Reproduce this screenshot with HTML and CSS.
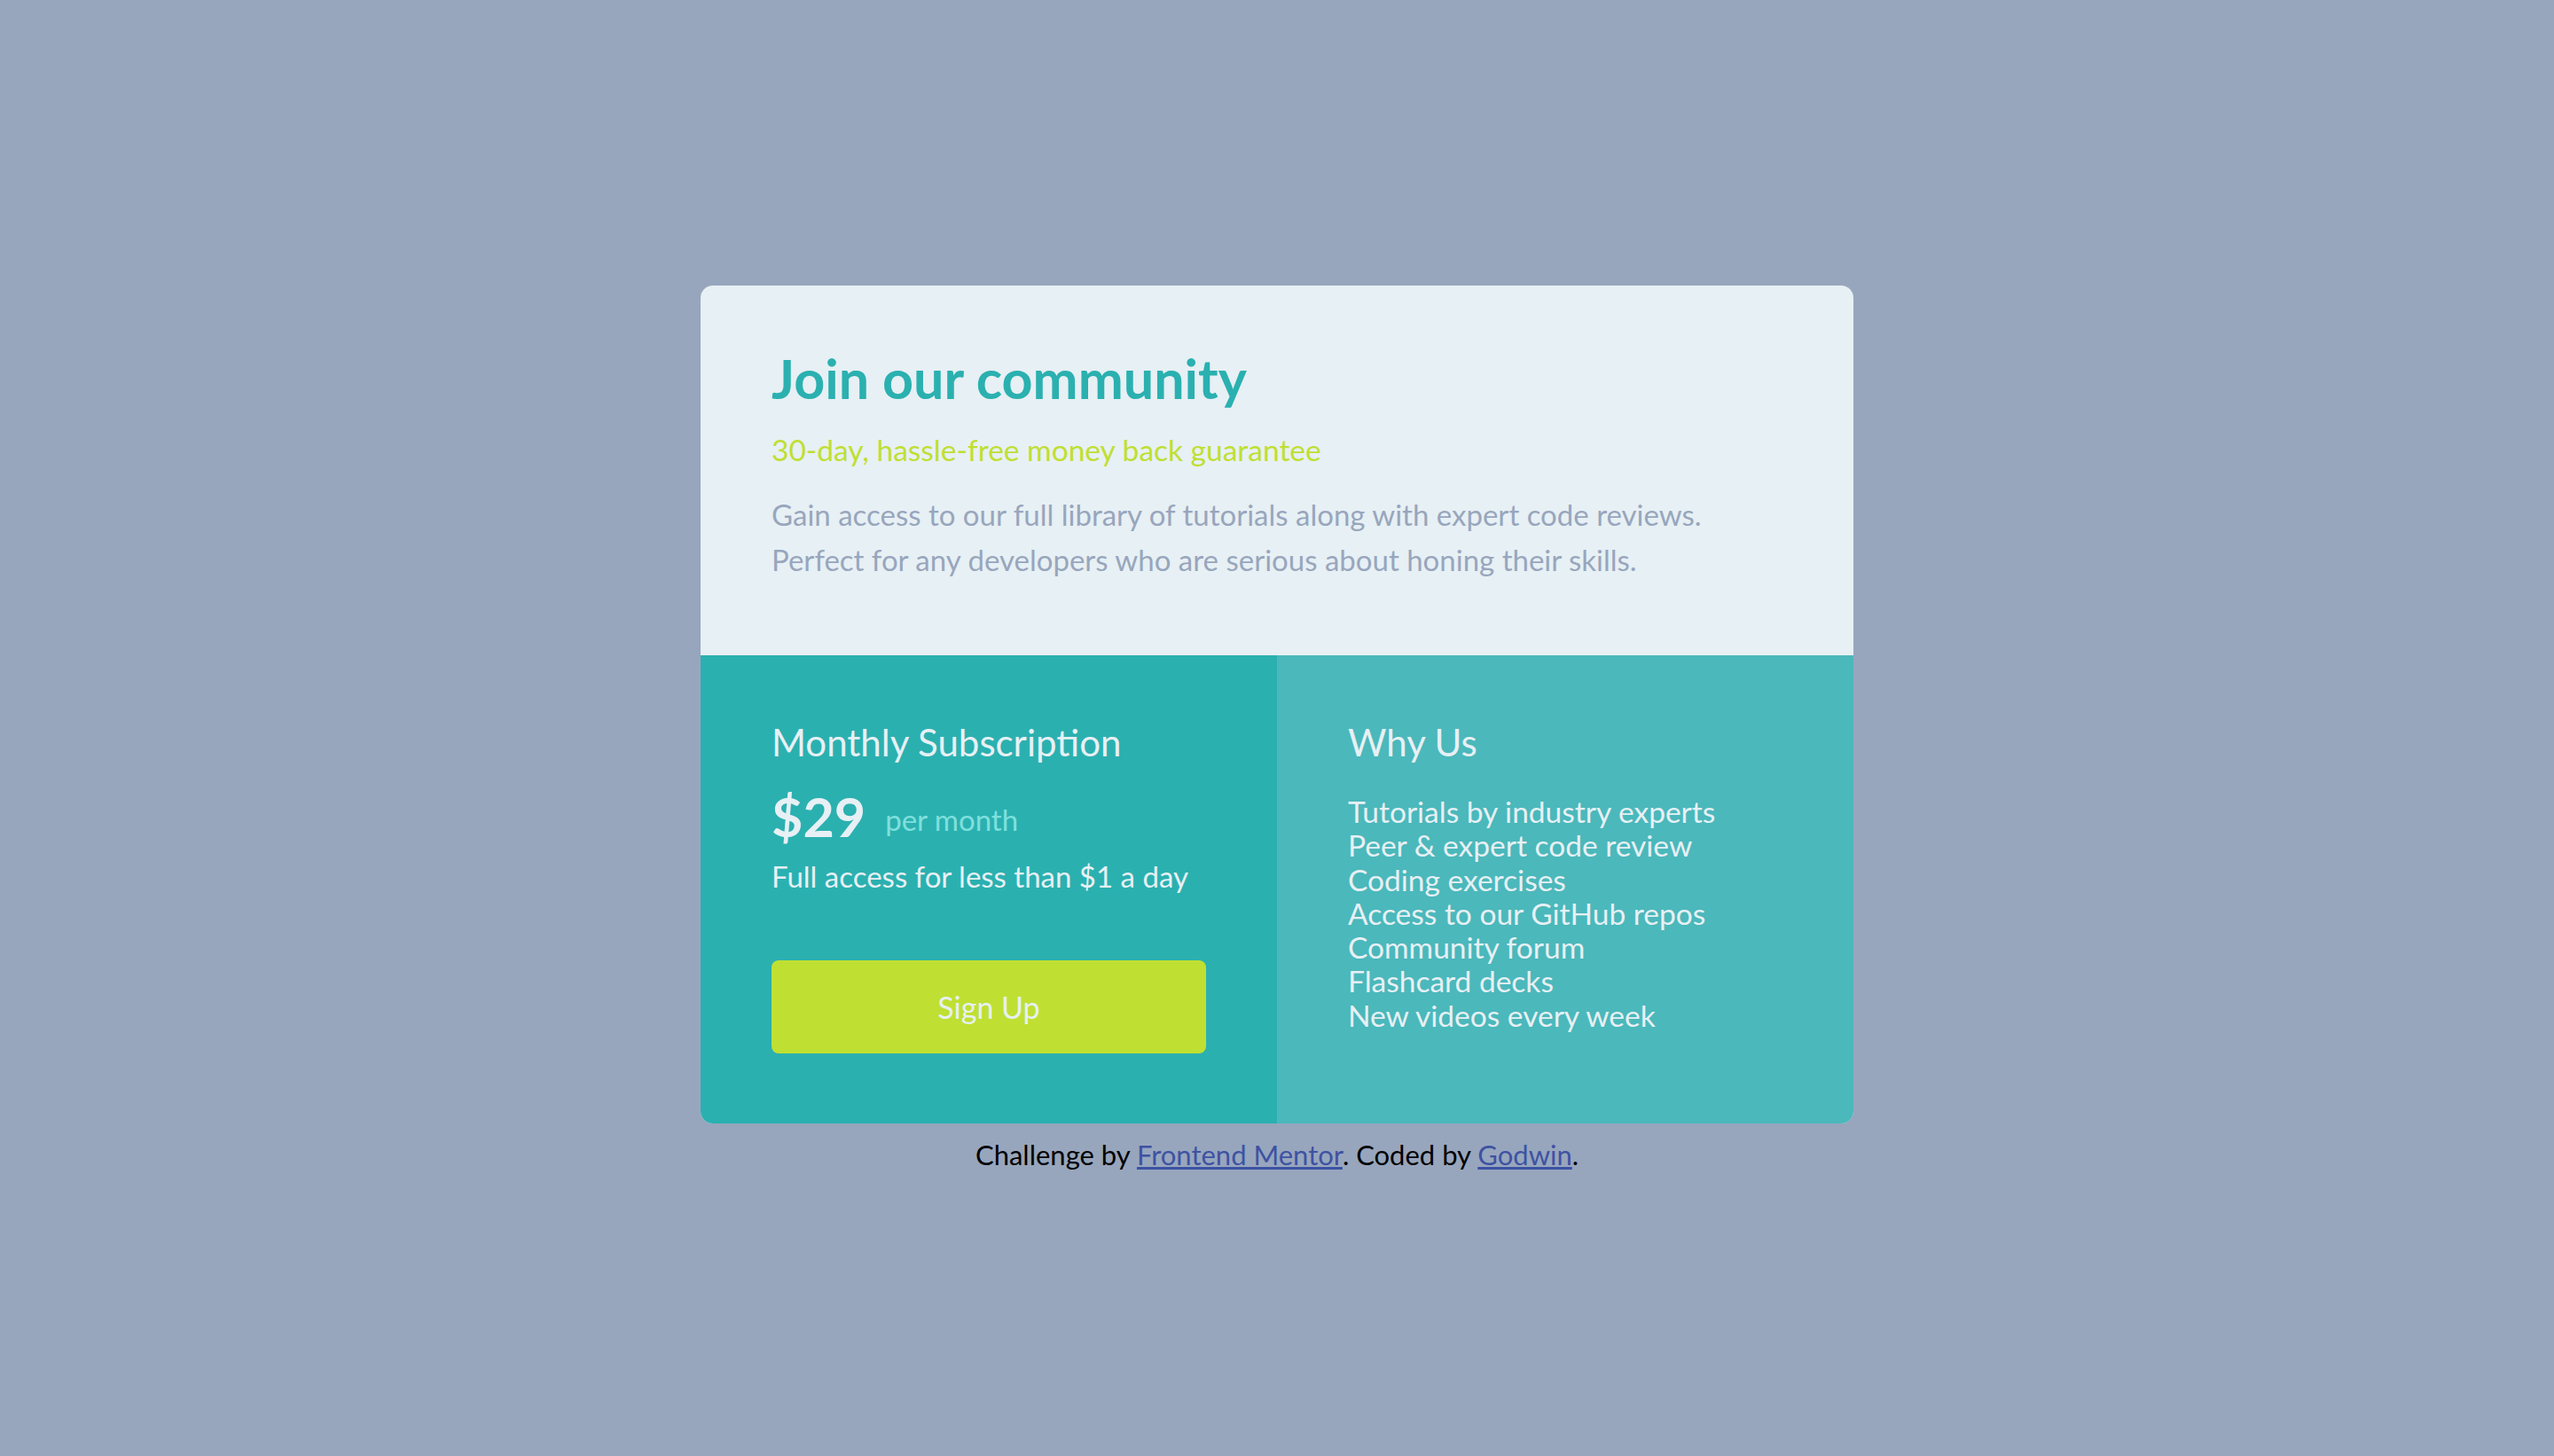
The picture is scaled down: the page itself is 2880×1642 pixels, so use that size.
FILE: index.html
```html
<!DOCTYPE html>
<html lang="en">
<head>
<meta charset="utf-8">
<title>Join our community</title>
<link rel="stylesheet" href="styles.css">
</head>
<body>
<main class="page">
  <section class="card">
    <div class="intro">
      <h1 class="title">Join our community</h1>
      <p class="guarantee">30-day, hassle-free money back guarantee</p>
      <p class="desc">Gain access to our full library of tutorials along with expert code reviews.<br>Perfect for any developers who are serious about honing their skills.</p>
    </div>
    <div class="bottom">
      <div class="sub">
        <h2 class="col-title">Monthly Subscription</h2>
        <div class="price-row"><span class="price">$29</span><span class="per">per month</span></div>
        <p class="access">Full access for less than $1 a day</p>
        <button class="signup">Sign Up</button>
      </div>
      <div class="why">
        <h2 class="col-title">Why Us</h2>
        <ul class="list">
          <li>Tutorials by industry experts</li>
          <li>Peer &amp; expert code review</li>
          <li>Coding exercises</li>
          <li>Access to our GitHub repos</li>
          <li>Community forum</li>
          <li>Flashcard decks</li>
          <li>New videos every week</li>
        </ul>
      </div>
    </div>
  </section>
  <footer class="attribution">Challenge by <a href="#">Frontend Mentor</a>. Coded by <a href="#">Godwin</a>.</footer>
</main>
</body>
</html>
```
FILE: styles.css
```css
* { box-sizing: border-box; }
html, body { margin: 0; padding: 0; }
body {
  background: #97a6bd;
  font-family: "Lato", "Open Sans", sans-serif;
  height: 1642px;
}
.page {
  height: 100%;
  padding-top: 322px;
  display: flex;
  flex-direction: column;
  align-items: center;
}
.card {
  width: 1300px;
  border-radius: 14px;
  overflow: hidden;
  background: #e7f0f4;
}
.intro {
  padding: 69px 80px 0;
  height: 417px;
}
.title {
  margin: 0;
  color: #2bb0b0;
  font-size: 61px;
  font-weight: 700;
  line-height: 72px;
}
.guarantee {
  margin: 24px 0 0;
  color: #bfdf32;
  font-size: 33.5px;
  line-height: 40px;
}
.desc {
  margin: 28px 0 0;
  color: #98a6bd;
  font-size: 33px;
  line-height: 51px;
}
.bottom {
  display: flex;
  height: 528px;
}
.sub, .why {
  flex: 1;
  padding: 73px 80px 0;
  color: #e7f0f4;
}
.sub { background: #2bb0b0; }
.why { background: #4bb8bb; }
.col-title {
  margin: 0;
  font-size: 42px;
  font-weight: 400;
  line-height: 50px;
}
.price-row {
  margin-top: 24px;
  font-size: 61px;
  font-weight: 700;
  line-height: 70px;
}
.per {
  margin-left: 22px;
  font-size: 33px;
  font-weight: 400;
  line-height: 1;
  color: #7fe0dd;
  vertical-align: 7px;
}
.access {
  margin: 12px 0 0;
  font-size: 33px;
  line-height: 40px;
}
.signup {
  display: block;
  width: 490px;
  height: 105px;
  margin-top: 75px;
  border: none;
  border-radius: 8px;
  background: #bfe032;
  color: #e7f0f4;
  font-family: inherit;
  font-size: 34px;
}
.list {
  list-style: none;
  margin: 34px 0 0;
  padding: 0;
  font-size: 33.5px;
  line-height: 38.3px;
}
.attribution {
  margin-top: 15px;
  font-size: 31px;
  line-height: 40px;
  color: #000;
}
.attribution a { color: #3e52a3; }
```
